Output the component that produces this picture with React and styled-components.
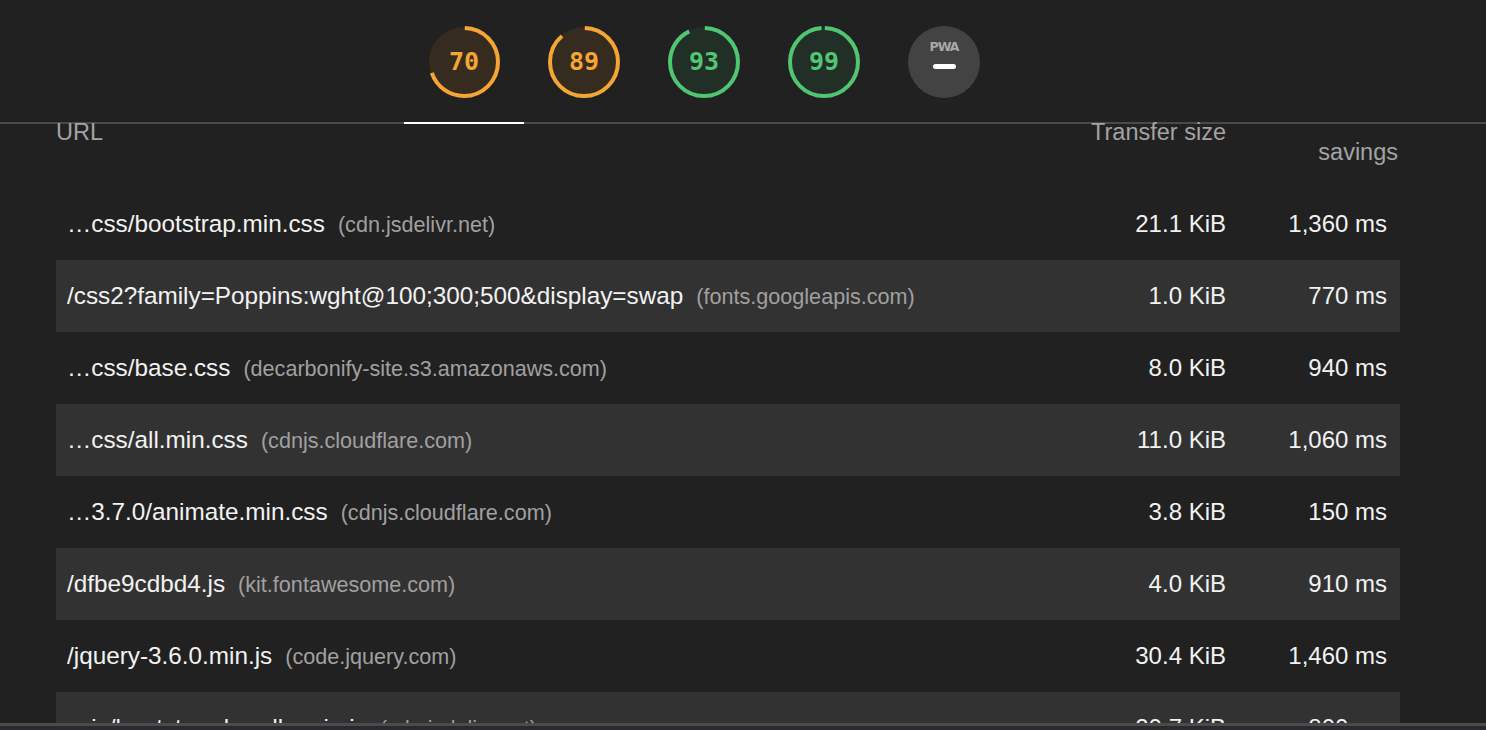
import React from "react";
import styled, { createGlobalStyle } from "styled-components";

const GlobalStyle = createGlobalStyle`
  html, body {
    margin: 0;
    padding: 0;
    background: #212121;
  }
  * {
    box-sizing: border-box;
  }
`;

const colors = {
  orange: { stroke: "#f4a534", fill: "#362b1f", text: "#f4a534" },
  green: { stroke: "#52c572", fill: "#222f26", text: "#52c572" },
};

const gauges = [
  { score: 70, tone: "orange" },
  { score: 89, tone: "orange" },
  { score: 93, tone: "green" },
  { score: 99, tone: "green" },
];

const rows = [
  { url: "…css/bootstrap.min.css", host: "cdn.jsdelivr.net", size: "21.1 KiB", ms: "1,360 ms" },
  { url: "/css2?family=Poppins:wght@100;300;500&display=swap", host: "fonts.googleapis.com", size: "1.0 KiB", ms: "770 ms" },
  { url: "…css/base.css", host: "decarbonify-site.s3.amazonaws.com", size: "8.0 KiB", ms: "940 ms" },
  { url: "…css/all.min.css", host: "cdnjs.cloudflare.com", size: "11.0 KiB", ms: "1,060 ms" },
  { url: "…3.7.0/animate.min.css", host: "cdnjs.cloudflare.com", size: "3.8 KiB", ms: "150 ms" },
  { url: "/dfbe9cdbd4.js", host: "kit.fontawesome.com", size: "4.0 KiB", ms: "910 ms" },
  { url: "/jquery-3.6.0.min.js", host: "code.jquery.com", size: "30.4 KiB", ms: "1,460 ms" },
  { url: "…js/bootstrap.bundle.min.js", host: "cdn.jsdelivr.net", size: "20.7 KiB", ms: "800 ms" },
];

const Page = styled.div`
  width: 1486px;
  height: 730px;
  display: flex;
  flex-direction: column;
  overflow: hidden;
  background: #212121;
  font-family: "Liberation Sans", Arial, sans-serif;
`;

const TopBar = styled.div`
  height: 124px;
  flex: none;
  display: flex;
  padding-left: 404px;
  border-bottom: 2px solid #4a4a4a;
`;

const Tab = styled.div`
  width: 120px;
  display: flex;
  justify-content: center;
  padding-top: 26px;
  margin-bottom: -2px;
  border-bottom: 2px solid ${(p) => (p.$active ? "#ffffff" : "transparent")};
`;

const GaugeBox = styled.div`
  position: relative;
  width: 72px;
  height: 72px;
`;

const GaugeNumber = styled.span`
  position: absolute;
  inset: 0;
  display: flex;
  align-items: center;
  justify-content: center;
  font-family: "DejaVu Sans Mono", "Liberation Mono", monospace;
  font-weight: bold;
  font-size: 25px;
  color: ${(p) => p.$color};
  padding-bottom: 1px;
`;

const PwaBadge = styled.div`
  width: 72px;
  height: 72px;
  border-radius: 50%;
  background: #434343;
  display: flex;
  flex-direction: column;
  align-items: center;
`;

const PwaLabel = styled.span`
  margin-top: 15px;
  font-family: "DejaVu Sans", sans-serif;
  font-weight: bold;
  font-size: 12.5px;
  letter-spacing: -1px;
  line-height: 11px;
  color: #a9a9a9;
`;

const PwaDash = styled.span`
  margin-top: 12px;
  width: 23px;
  height: 5px;
  border-radius: 3px;
  background: #ffffff;
`;

const Table = styled.div`
  flex: 1;
  min-height: 0;
  display: flex;
  flex-direction: column;
  padding: 0 86px 0 56px;
`;

const HeadRow = styled.div`
  height: 68px;
  flex: none;
  margin-top: -4px;
  display: grid;
  grid-template-columns: 1fr 160px 172px;
  padding-right: 2px;
  font-size: 23.5px;
  line-height: 24px;
  color: #a3a3a3;
`;

const HeadCell = styled.div`
  text-align: ${(p) => (p.$right ? "right" : "left")};
  padding-top: ${(p) => p.$drop || 0}px;
`;

const Body = styled.div`
  flex: 1;
  min-height: 0;
  overflow: hidden;
`;

const Row = styled.div`
  height: 72px;
  display: grid;
  grid-template-columns: 1fr 160px 161px;
  align-items: center;
  padding: 0 13px 0 11px;
  background: ${(p) => (p.$shade ? "#323232" : "transparent")};
  color: #f2f2f2;
  font-size: 24px;
  white-space: nowrap;
`;

const UrlCell = styled.div`
  overflow: hidden;
  font-size: 24.3px;
`;

const Host = styled.span`
  margin-left: 13px;
  font-size: 21.6px;
  color: #a0a0a0;
`;

const NumCell = styled.div`
  text-align: right;
`;

const Footer = styled.div`
  height: 7px;
  flex: none;
  border-top: 3px solid #4b4b4b;
  background: #2a2a2e;
`;

const Gauge = ({ score, tone }) => {
  const c = colors[tone];
  const r = 34;
  const len = 2 * Math.PI * r;
  const arc = (len * score) / 100;
  return (
    <GaugeBox>
      <svg width="72" height="72" viewBox="0 0 72 72">
        <circle cx="36" cy="36" r="35" fill={c.fill} />
        <circle
          cx="36"
          cy="36"
          r={r}
          fill="none"
          stroke={c.stroke}
          strokeWidth="4"
          strokeDasharray={`${arc - 1.5} ${len}`}
          strokeDashoffset="-0.8"
          transform="rotate(-90 36 36)"
        />
      </svg>
      <GaugeNumber $color={c.text}>{score}</GaugeNumber>
    </GaugeBox>
  );
};

const App = () => (
  <Page>
    <GlobalStyle />
    <TopBar>
      {gauges.map((g, i) => (
        <Tab key={g.score} $active={i === 0}>
          <Gauge score={g.score} tone={g.tone} />
        </Tab>
      ))}
      <Tab>
        <PwaBadge>
          <PwaLabel>PWA</PwaLabel>
          <PwaDash />
        </PwaBadge>
      </Tab>
    </TopBar>
    <Table>
      <HeadRow>
        <HeadCell>URL</HeadCell>
        <HeadCell $right>Transfer size</HeadCell>
        <HeadCell $right $drop={20}>savings</HeadCell>
      </HeadRow>
      <Body>
        {rows.map((r, i) => (
          <Row key={r.url} $shade={i % 2 === 1}>
            <UrlCell>
              {r.url}
              <Host>({r.host})</Host>
            </UrlCell>
            <NumCell>{r.size}</NumCell>
            <NumCell>{r.ms}</NumCell>
          </Row>
        ))}
      </Body>
    </Table>
    <Footer />
  </Page>
);

export default App;
